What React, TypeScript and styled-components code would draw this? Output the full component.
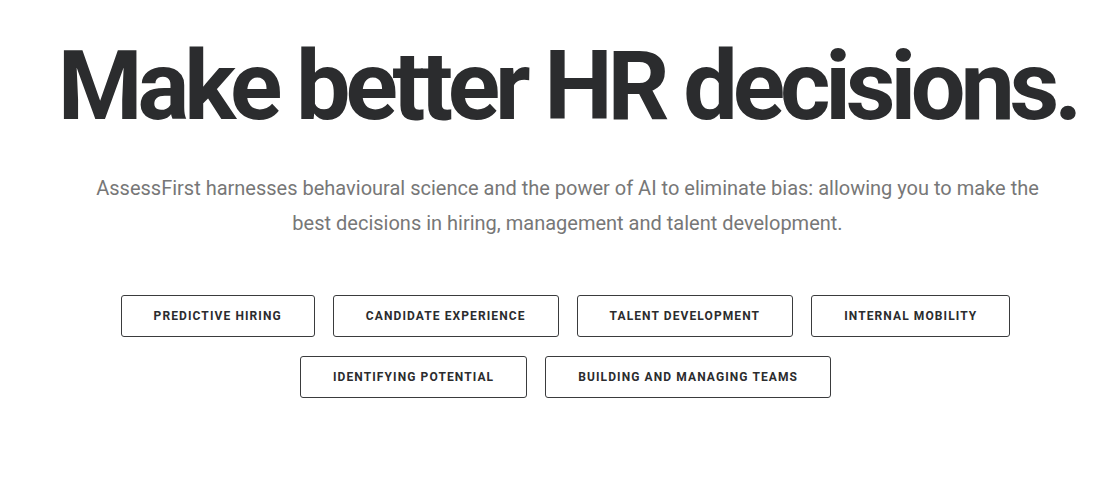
import React from "react";
import styled, { createGlobalStyle } from "styled-components";

const GlobalStyle = createGlobalStyle`
  html, body {
    margin: 0;
    padding: 0;
    background: #ffffff;
  }
  body {
    font-family: Roboto, "Liberation Sans", Arial, sans-serif;
  }
`;

const topics = [
  "Predictive hiring",
  "Candidate experience",
  "Talent development",
  "Internal mobility",
  "Identifying potential",
  "Building and managing teams",
];

const App: React.FC = () => {
  return (
    <>
      <GlobalStyle />
      <Hero>
        <Title>Make better HR decisions.</Title>
        <Lead>
          AssessFirst harnesses behavioural science and the power of AI to eliminate bias: allowing you to make the
          best decisions in hiring, management and talent development.
        </Lead>
        <Topics>
          {topics.map((t) => (
            <TopicButton key={t}>{t}</TopicButton>
          ))}
        </Topics>
      </Hero>
    </>
  );
};

export default App;

const Hero = styled.section`
  display: flex;
  flex-direction: column;
  align-items: center;
  padding: 24px 0 0 22px;
  box-sizing: border-box;
  width: 100%;
`;

const Title = styled.h1`
  margin: 0;
  font-family: Roboto, "Liberation Sans", Arial, sans-serif;
  font-weight: 700;
  font-size: 97px;
  line-height: 124px;
  letter-spacing: -5.2px;
  color: #2b2c2e;
  white-space: nowrap;
`;

const Lead = styled.p`
  margin: 23px 0 0;
  max-width: 960px;
  text-align: center;
  font-size: 20px;
  line-height: 35px;
  color: #777777;
`;

const Topics = styled.div`
  display: flex;
  flex-wrap: wrap;
  justify-content: center;
  gap: 19px 18px;
  max-width: 920px;
  margin-top: 54px;
  margin-right: 4px;
`;

const TopicButton = styled.button`
  height: 42px;
  padding: 0 32px;
  background: #ffffff;
  border: 1px solid #3a3b3d;
  border-radius: 3px;
  font-family: Roboto, "Liberation Sans", Arial, sans-serif;
  font-weight: 700;
  font-size: 12px;
  letter-spacing: 1.1px;
  text-transform: uppercase;
  color: #2b2c2e;
  cursor: pointer;
`;
